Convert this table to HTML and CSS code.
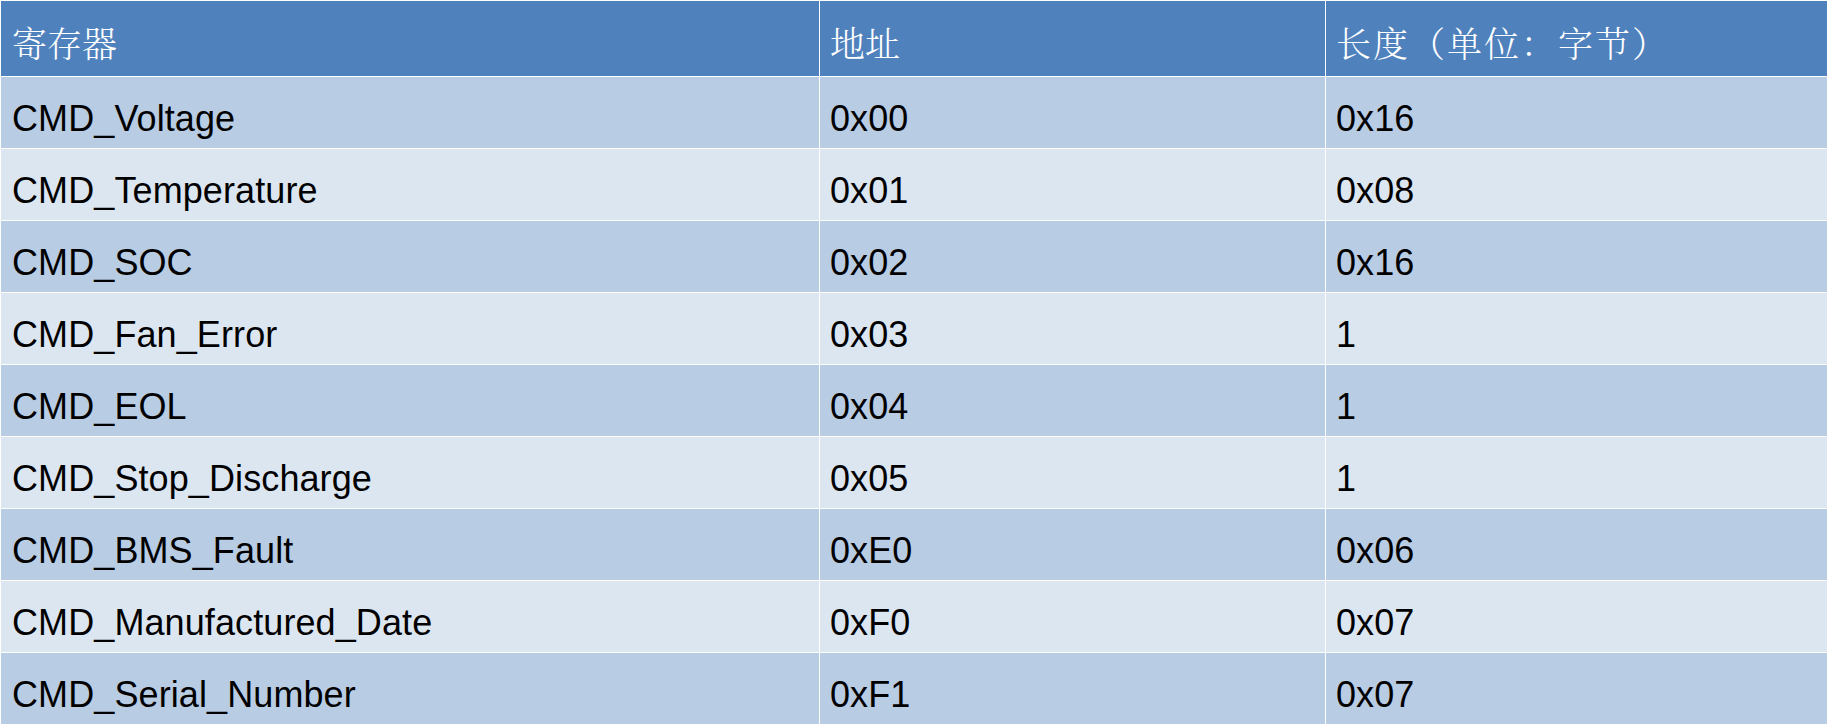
FILE: index.html
```html
<!DOCTYPE html>
<html lang="zh">
<head>
<meta charset="utf-8">
<title>寄存器</title>
<link rel="stylesheet" href="styles.css">
</head>
<body>
<div class="table">
  <div class="cell head">寄存器</div>
  <div class="cell head c2">地址</div>
  <div class="cell head c3 wide">长度（单位：字节）</div>

  <div class="cell odd">CMD_Voltage</div>
  <div class="cell odd c2">0x00</div>
  <div class="cell odd c3">0x16</div>

  <div class="cell even">CMD_Temperature</div>
  <div class="cell even c2">0x01</div>
  <div class="cell even c3">0x08</div>

  <div class="cell odd">CMD_SOC</div>
  <div class="cell odd c2">0x02</div>
  <div class="cell odd c3">0x16</div>

  <div class="cell even">CMD_Fan_Error</div>
  <div class="cell even c2">0x03</div>
  <div class="cell even c3">1</div>

  <div class="cell odd">CMD_EOL</div>
  <div class="cell odd c2">0x04</div>
  <div class="cell odd c3">1</div>

  <div class="cell even">CMD_Stop_Discharge</div>
  <div class="cell even c2">0x05</div>
  <div class="cell even c3">1</div>

  <div class="cell odd">CMD_BMS_Fault</div>
  <div class="cell odd c2">0xE0</div>
  <div class="cell odd c3">0x06</div>

  <div class="cell even">CMD_Manufactured_Date</div>
  <div class="cell even c2">0xF0</div>
  <div class="cell even c3">0x07</div>

  <div class="cell odd">CMD_Serial_Number</div>
  <div class="cell odd c2">0xF1</div>
  <div class="cell odd c3">0x07</div>
</div>
</body>
</html>
```

FILE: styles.css
```css
html, body {
  margin: 0;
  padding: 0;
  background: #ffffff;
}

body {
  width: 1827px;
  height: 725px;
  overflow: hidden;
}

.table {
  display: grid;
  grid-template-columns: 818px 505px 501px;
  grid-template-rows: 75px repeat(9, 71px);
  column-gap: 1px;
  row-gap: 1px;
  padding: 1px 0 0 1px;
  background: #ffffff;
  font-family: "Liberation Sans", Arial, "Noto Sans CJK SC", sans-serif;
  font-size: 36px;
  letter-spacing: 0.1px;
  color: #000000;
}

.cell {
  display: flex;
  align-items: center;
  padding: 12px 0 0 11px;
  box-sizing: border-box;
  white-space: nowrap;
  line-height: 1;
}

.c2, .c3 {
  padding-left: 10px;
}

.head {
  background: #4f81bd;
  color: #ffffff;
  font-family: "Noto Serif CJK SC", "Noto Sans CJK SC", sans-serif;
  font-size: 35px;
  font-weight: 300;
  letter-spacing: 0;
  padding-top: 8px;
}

.head.wide {
  letter-spacing: 2px;
}

.odd {
  background: #b8cce4;
}

.even {
  background: #dce6f1;
}
```
